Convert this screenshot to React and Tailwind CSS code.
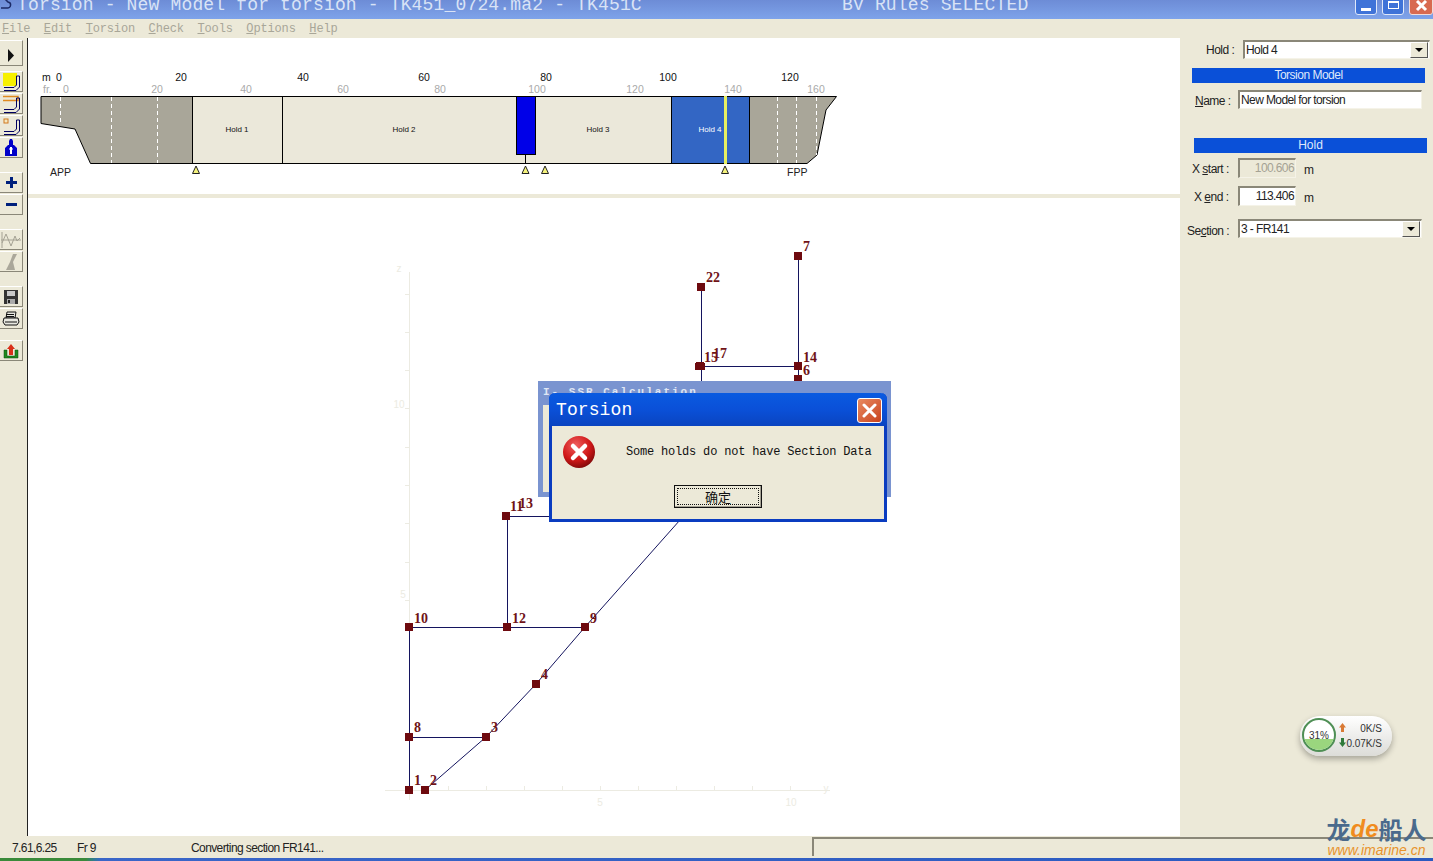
import React from 'react';

const SANS = "font-['Liberation_Sans',Arial,sans-serif]";

const menuItems = [
  ['F', 'ile'],
  ['E', 'dit'],
  ['T', 'orsion'],
  ['C', 'heck'],
  ['T', 'ools'],
  ['O', 'ptions'],
  ['H', 'elp'],
];

const CornerShape = ({ children }) => (
  <svg width="19" height="18" viewBox="0 0 19 18">
    {children}
    <path d="M2 14.5h10l2.5-2.5V3" fill="none" stroke="#000060" />
    <path d="M2 17.5h12l3.5-3.5V3" fill="none" stroke="#000060" />
    <path d="M14.5 3h3" stroke="#000060" />
  </svg>
);

const toolGroups = [
  {
    mt: 'mt-[2px]',
    btn: 'h-[26px] pt-[4px]',
    items: [
      <svg key="play" width="8" height="13" viewBox="0 0 8 13"><path d="M1 0l6 6.5-6 6.5z" fill="#111" /></svg>,
    ],
  },
  {
    mt: 'mt-[5px]',
    btn: 'h-[21px]',
    items: [
      <CornerShape key="a"><rect x="1" y="0" width="14" height="13" fill="#f7f000" /></CornerShape>,
      <CornerShape key="b"><path d="M1 1.5h15v4H1" fill="none" stroke="#e08a20" strokeWidth="1.4" /></CornerShape>,
      <CornerShape key="c"><rect x="2" y="2" width="4" height="4" fill="#f5e8c0" stroke="#d07a20" /></CornerShape>,
      <svg key="d" width="14" height="19" viewBox="0 0 14 19">
        <path d="M1 18V10L4 7h1V3l1-2h2l1 2v4h1l3 3v8z" fill="#0000c8" />
        <path d="M6 9h2v7H6zM5 10.5h4v1H5z" fill="#fff" />
      </svg>,
    ],
  },
  {
    mt: 'mt-[14px]',
    btn: 'h-[21px]',
    items: [
      <svg key="plus" width="13" height="13" viewBox="0 0 13 13"><path d="M5 1h3v4h4v3H8v4H5V8H1V5h4z" fill="#00207c" /></svg>,
      <svg key="minus" width="13" height="13" viewBox="0 0 13 13"><rect x="1" y="5" width="11" height="3" fill="#00207c" /></svg>,
    ],
  },
  {
    mt: 'mt-[14px]',
    btn: 'h-[21px]',
    items: [
      <svg key="wave" width="20" height="18" viewBox="0 0 20 18" fill="none" stroke="#a5a294">
        <path d="M1 1v16M0 9h20" />
        <path d="M1 12l4-9 5 12 4-10 2 5 3-3" />
      </svg>,
      <svg key="tie" width="16" height="18" viewBox="0 0 16 18">
        <path d="M10 1h4L10 9l2 8H3l4-8z" fill="#aaa79a" />
      </svg>,
    ],
  },
  {
    mt: 'mt-[14px]',
    btn: 'h-[21px]',
    items: [
      <svg key="save" width="16" height="16" viewBox="0 0 16 16">
        <path d="M1 1h14v14H1z" fill="#333" />
        <rect x="4" y="2" width="8" height="5" fill="#c8c8c8" />
        <rect x="4" y="10" width="8" height="5" fill="#aaa" />
        <rect x="5" y="11" width="2" height="3" fill="#222" />
      </svg>,
      <svg key="print" width="18" height="16" viewBox="0 0 18 16" fill="#e8e8e0" stroke="#111">
        <path d="M5 1h9l-1 6H4z" />
        <path d="M2 7h14l1 4-2 3H3l-2-3z" />
        <path d="M3 11h12M4 3.5h8M4 5.5h8" />
      </svg>,
    ],
  },
  {
    mt: 'mt-[11px]',
    btn: 'h-[21px]',
    items: [
      <svg key="export" width="16" height="16" viewBox="0 0 16 16">
        <path d="M1 7h3v6h8V7h3v8H1z" fill="#1f8a1f" stroke="#0c4a0c" strokeWidth=".5" />
        <path d="M8 1l4 5H10v6H6V6H4z" fill="#d9301a" />
      </svg>,
    ],
  },
];

const ToolButton = ({ className, children }) => (
  <div className={`w-[23px] flex items-center justify-center bg-[#ece9d8] border-r border-b border-[#8a8778] border-t border-t-white shrink-0 ${className}`}>
    {children}
  </div>
);

const Toolbar = () => (
  <div className="w-[28px] shrink-0 bg-[#ece9d8] border-r border-[#222] flex flex-col">
    {toolGroups.map((group, i) => (
      <div key={i} className={`flex flex-col gap-[1px] ${group.mt}`}>
        {group.items.map((item, j) => (
          <ToolButton key={j} className={group.btn}>{item}</ToolButton>
        ))}
      </div>
    ))}
  </div>
);

const ShipProfile = () => {
  const mScale = [[0, 59], [20, 181], [40, 303], [60, 424], [80, 546], [100, 668], [120, 790]];
  const frScale = [[0, 66], [20, 157], [40, 246], [60, 343], [80, 440], [100, 537], [120, 635], [140, 733], [160, 816]];
  return (
    <svg className="block" width="1152" height="156" viewBox="28 38 1152 156" fontFamily="Liberation Sans, Arial, sans-serif">
      <text x="42" y="81" fontSize="10.5" fill="#111">m</text>
      {mScale.map(([v, x]) => (
        <text key={v} x={x} y="81" fontSize="10.5" textAnchor="middle" fill="#111">{v}</text>
      ))}
      <text x="43" y="93" fontSize="10.5" fill="#aaa">fr.</text>
      {frScale.map(([v, x]) => (
        <text key={v} x={x} y="93" fontSize="10.5" textAnchor="middle" fill="#aaa">{v}</text>
      ))}

      <path d="M41 96.5H192.5V163.5H90.5L75 129L41 123.5Z" fill="#a9a699" stroke="#000" />
      <rect x="192.5" y="96.5" width="90" height="67" fill="#ebe8da" stroke="#000" />
      <rect x="282.5" y="96.5" width="389" height="67" fill="#ebe8da" stroke="#000" />
      <rect x="671.5" y="96.5" width="78" height="67" fill="#3366c4" stroke="#000" />
      <path d="M749.5 96.5H836.5L826 110L817 155L807 163.5H749.5Z" fill="#a9a699" stroke="#000" />

      {[[60.5, 97, 123], [111.5, 97, 163], [157.5, 97, 163], [777.5, 97, 163], [796.5, 97, 163], [816.5, 97, 155]].map(([x, y1, y2]) => (
        <line key={x} x1={x} x2={x} y1={y1} y2={y2} stroke="#fff" strokeDasharray="4 3" />
      ))}

      <rect x="516.5" y="96.5" width="19" height="58" fill="#0000e8" stroke="#000" />
      <line x1="525.5" x2="525.5" y1="155" y2="164" stroke="#000" />
      <rect x="724" y="96" width="3" height="68" fill="#e8f060" />

      <text x="237" y="132" fontSize="8" textAnchor="middle" fill="#111">Hold 1</text>
      <text x="404" y="132" fontSize="8" textAnchor="middle" fill="#111">Hold 2</text>
      <text x="598" y="132" fontSize="8" textAnchor="middle" fill="#111">Hold 3</text>
      <text x="710" y="132" fontSize="8" textAnchor="middle" fill="#fff">Hold 4</text>

      {[196, 525.5, 545, 725].map((x) => (
        <path key={x} d={`M${x} 166L${x + 3.5} 173.5H${x - 3.5}Z`} fill="#f4f27c" stroke="#222" />
      ))}

      <text x="50" y="176" fontSize="10.5" fill="#222">APP</text>
      <text x="787" y="176" fontSize="10.5" fill="#222">FPP</text>
    </svg>
  );
};

const nodes = [
  [409, 790, '1', 414, 785],
  [425, 790, '2', 430, 785],
  [486, 737, '3', 491, 732],
  [536, 684, '4', 541, 679],
  [585, 627, '9', 590, 623],
  [409, 737, '8', 414, 732],
  [409, 627, '10', 414, 623],
  [507, 627, '12', 512, 623],
  [506, 516, '11', 510, 511],
  [700, 366, '15', 704, 362],
  [798, 366, '14', 803, 362],
  [798, 379, '6', 803, 375],
  [701, 287, '22', 706, 282],
  [798, 256, '7', 803, 251],
];

const SectionChart = () => (
  <svg className="block" width="1152" height="638" viewBox="28 198 1152 638">
    <g stroke="#ecebe2" fill="none">
      <path d="M409.5 272V800" />
      <path d="M385 790.5H830" />
      {[294, 332, 370, 408, 447, 485, 523, 562, 600].map((y) => (
        <path key={y} d={`M405 ${y}.5H409`} />
      ))}
      {[448, 486, 524, 562, 600, 638, 676, 714, 752, 790].map((x) => (
        <path key={x} d={`M${x}.5 786V790`} />
      ))}
    </g>
    <g fontFamily="Liberation Sans, Arial, sans-serif" fontSize="10" fill="#ecebe2">
      <text x="399" y="408" textAnchor="middle">10</text>
      <text x="403" y="598" textAnchor="middle">5</text>
      <text x="399" y="272" textAnchor="middle">z</text>
      <text x="600" y="806" textAnchor="middle">5</text>
      <text x="791" y="806" textAnchor="middle">10</text>
      <text x="826" y="792" textAnchor="middle">y</text>
    </g>

    <g stroke="#14145e" fill="none">
      <path d="M409.5 790V627.5H585" />
      <path d="M409 737.5H486" />
      <path d="M507.5 627V516.5H560" />
      <path d="M701.5 287V385" />
      <path d="M798.5 256V385" />
      <path d="M700 366.5H798" />
      <path d="M425 790L486 737L536 684L585 627L680 520" />
    </g>

    {nodes.map(([x, y, label]) => (
      <rect key={label} x={x - 4} y={y - 4} width="8" height="8" fill="#6e0a0f" />
    ))}
    <rect x="695" y="363" width="10" height="7" fill="#6e0a0f" />
    <g fontFamily="Liberation Serif, Times New Roman, serif" fontSize="14" fontWeight="bold" fill="#701317">
      {nodes.map(([, , label, tx, ty]) => (
        <text key={label} x={tx} y={ty}>{label}</text>
      ))}
      <text x="519" y="508">13</text>
      <text x="713" y="358">17</text>
    </g>
  </svg>
);

const Label = ({ pre, mark, post, className }) => (
  <span className={`absolute text-[12px] tracking-[-0.5px] text-[#222] ${className}`}>
    {pre}
    {mark && <span className="underline">{mark}</span>}
    {post}
  </span>
);

const Arrow = () => (
  <div className="w-[18px] h-[16px] mr-[1px] shrink-0 bg-[#ece9d8] border border-t-white border-l-white border-r-[#555] border-b-[#555] flex items-center justify-center">
    <div className="w-0 h-0 border-x-[4px] border-x-transparent border-t-[4px] border-t-black" />
  </div>
);

const Field = ({ className, children, disabled, arrow, align }) => (
  <div
    className={`flex items-center text-[12px] tracking-[-0.6px] border-t-2 border-l-2 border-t-[#8a8778] border-l-[#8a8778] border-b border-r border-b-[#f5f3e8] border-r-[#f5f3e8] ${
      disabled ? 'bg-[#ece9d8] text-[#a5a294]' : 'bg-white text-[#222]'
    } ${align === 'right' ? 'justify-end pr-[1px] pb-[1px]' : 'pl-[1px]'} ${className}`}
  >
    <span className={arrow ? 'flex-1 whitespace-nowrap' : 'whitespace-nowrap'}>{children}</span>
    {arrow && <Arrow />}
  </div>
);

const RightPanel = () => (
  <div className={`relative w-[253px] shrink-0 bg-[#ece9d8] ${SANS}`}>
    <Label className="left-[26px] top-[3px]" pre="Hold :" />
    <Field arrow className="absolute left-[63px] top-[2px] w-[187px] h-[19px]">Hold 4</Field>
    <div className="absolute left-[12px] top-[30px] w-[233px] h-[15px] bg-[#0a50d8] text-[#dfe8fa] text-[12px] tracking-[-0.5px] leading-[15px] text-center">Torsion Model</div>
    <Label className="left-[15px] top-[54px]" mark="N" post="ame :" />
    <Field className="absolute left-[58px] top-[52px] w-[184px] h-[19px]">New Model for torsion</Field>
    <div className="absolute left-[14px] top-[100px] w-[233px] h-[15px] bg-[#0a50d8] text-[#dfe8fa] text-[12px] leading-[15px] text-center">Hold</div>
    <Label className="left-[12px] top-[122px]" pre="X " mark="s" post="tart :" />
    <Field disabled align="right" className="absolute left-[58px] top-[120px] w-[58px] h-[20px]">100.606</Field>
    <Label className="left-[124px] top-[123px]" pre="m" />
    <Label className="left-[14px] top-[150px]" pre="X " mark="e" post="nd :" />
    <Field align="right" className="absolute left-[58px] top-[148px] w-[58px] h-[20px]">113.406</Field>
    <Label className="left-[124px] top-[151px]" pre="m" />
    <Label className="left-[7px] top-[184px]" pre="Se" mark="c" post="tion :" />
    <Field arrow className="absolute left-[58px] top-[181px] w-[184px] h-[19px]">3 - FR141</Field>

    {/* network meter */}
    <div className="absolute left-[120px] top-[678px] w-[92px] h-[40px] rounded-full bg-gradient-to-b from-white to-[#dcdcd8] shadow-[0_3px_6px_rgba(0,0,0,0.3)]">
      <div className="absolute left-[2px] top-[2px] w-[34px] h-[34px] rounded-full border-2 border-[#4f8f55] overflow-hidden bg-white">
        <div className="absolute left-0 right-0 bottom-0 h-[11px] bg-[#9ad67e]" />
        <span className="absolute inset-0 flex items-center justify-center text-[10px] text-[#333]">31%</span>
      </div>
      <svg className="absolute left-[38px] top-[6px]" width="9" height="11" viewBox="0 0 9 11"><path d="M4.5 1L8 5.5H6V10H3V5.5H1z" fill="#d97a35" /></svg>
      <svg className="absolute left-[38px] top-[21px]" width="9" height="11" viewBox="0 0 9 11"><path d="M4.5 10L1 5.5h2V1h3v4.5h2z" fill="#2f7a3a" /></svg>
      <span className="absolute right-[10px] top-[5px] text-[10px] text-[#333]">0K/S</span>
      <span className="absolute right-[10px] top-[20px] text-[10px] text-[#333]">0.07K/S</span>
    </div>
  </div>
);

const ErrorDialog = () => (
  <>
    {/* window behind the message box */}
    <div className="absolute left-[538px] top-[381px] w-[353px] h-[116px] bg-[#7a94d0] pl-[5px] pr-[5px] pb-[5px] flex flex-col">
      <div className="h-[24px] text-[11px] leading-[22px] font-bold text-[#dfe6f5] font-['Liberation_Mono',monospace] tracking-[2px]">I- SSR Calculation</div>
      <div className="flex-1 bg-[#ece9d8]" />
    </div>
    <div className="absolute left-[549px] top-[393px] w-[338px] h-[129px] bg-[#ece9d8] border-[3px] border-t-0 border-[#0a3cc0] rounded-t-[6px] flex flex-col">
      <div className="relative -mx-[3px] h-[33px] rounded-t-[6px] bg-gradient-to-b from-[#0a5ae0] via-[#0a50d8] to-[#0a44c0] shrink-0">
        <span className="absolute left-[7px] top-[5px] text-[18px] leading-[24px] tracking-[0.1px] text-white font-['Liberation_Mono',monospace]">Torsion</span>
        <div className="absolute right-[5px] top-[5px] w-[25px] h-[25px] rounded-[3px] border border-white bg-gradient-to-br from-[#e88a60] to-[#c8401a] flex items-center justify-center">
          <svg width="15" height="15" viewBox="0 0 15 15"><path d="M2 2l11 11M13 2L2 13" stroke="#fff" strokeWidth="3" strokeLinecap="round" /></svg>
        </div>
      </div>
      <div className="relative flex-1">
        <svg className="absolute left-[10px] top-[9px]" width="34" height="34" viewBox="0 0 34 34">
          <defs>
            <radialGradient id="errorFill" cx="40%" cy="30%" r="75%">
              <stop offset="0" stopColor="#f06060" />
              <stop offset="0.6" stopColor="#d01818" />
              <stop offset="1" stopColor="#7a0808" />
            </radialGradient>
          </defs>
          <circle cx="17" cy="17" r="16" fill="url(#errorFill)" />
          <path d="M11 11l12 12M23 11L11 23" stroke="#fff" strokeWidth="4.5" strokeLinecap="round" />
        </svg>
        <span className="absolute left-[74px] top-[18px] text-[12px] leading-[16px] text-[#111] whitespace-nowrap font-['Liberation_Mono',monospace] tracking-[-0.19px]">Some holds do not have Section Data</span>
        <button className="absolute left-[122px] top-[59px] w-[88px] h-[23px] p-[2px] bg-[#ece9d8] border border-[#111] shadow-[inset_-1px_-1px_0_#a5a294]">
          <div className="w-full h-full flex items-center justify-center border border-dotted border-[#111] text-[13px] text-[#111] font-['Noto_Sans_CJK_SC',sans-serif]">确定</div>
        </button>
      </div>
    </div>
  </>
);

const App = () => (
  <div className={`relative w-[1433px] h-[861px] overflow-hidden flex flex-col bg-[#ece9d8] ${SANS}`}>
    {/* title bar, scrolled partly off the top */}
    <div className="relative h-[19px] shrink-0 overflow-hidden bg-gradient-to-b from-[#6d8cd6] to-[#7ea3ea] text-[#d9e3f6] font-['Liberation_Mono',monospace] text-[18px] leading-[14px] whitespace-nowrap">
      <svg className="absolute left-0 -top-[2px]" width="12" height="12" viewBox="0 0 12 12"><path d="M1 10h6a3 3 0 0 0 1-6L5 1" fill="none" stroke="#1c2a66" strokeWidth="1.5" /></svg>
      <span className="absolute left-[17px] -top-[2px] tracking-[0.16px]">Torsion - New Model for torsion - TK451_0724.ma2 - TK451C</span>
      <span className="absolute left-[842px] -top-[2px] tracking-[0.16px]">BV Rules SELECTED</span>
      <div className="absolute left-[1355px] -top-[5px] flex gap-[5px]">
        <div className="w-[22px] h-[20px] rounded-[3px] border border-[#dfe8fa] bg-[#3f73d8] flex items-end justify-center pb-[3px]"><div className="w-[10px] h-[3px] bg-white" /></div>
        <div className="w-[22px] h-[20px] rounded-[3px] border border-[#dfe8fa] bg-[#3f73d8] flex items-center justify-center"><div className="w-[11px] h-[8px] border border-t-2 border-white" /></div>
        <div className="w-[24px] h-[20px] rounded-[3px] border border-[#f0dcd8] bg-[#d86a50] flex items-center justify-center">
          <svg width="13" height="13" viewBox="0 0 13 13"><path d="M2 2l9 9M11 2l-9 9" stroke="#fff" strokeWidth="3" /></svg>
        </div>
      </div>
    </div>

    {/* menu */}
    <div className="h-[19px] shrink-0 flex items-center gap-[13.6px] pl-[2px] text-[#a8a698] font-['Liberation_Mono',monospace] text-[12px] tracking-[-0.15px]">
      {menuItems.map(([mark, rest], i) => (
        <span key={i}>
          <span className="underline">{mark}</span>
          {rest}
        </span>
      ))}
    </div>

    <div className="flex h-[798px] shrink-0">
      <Toolbar />
      <div className="flex flex-col flex-1 min-w-0 bg-white">
        <ShipProfile />
        <div className="h-[4px] shrink-0 bg-[#ece9d8]" />
        <SectionChart />
      </div>
      <RightPanel />
    </div>

    {/* status bar */}
    <div className="relative h-[22px] shrink-0 flex items-center text-[12px] tracking-[-0.6px] text-[#222]">
      <span className="ml-[12px] w-[65px] mt-[1px]">7.61,6.25</span>
      <span className="w-[114px] mt-[1px]">Fr 9</span>
      <span className="w-[621px] mt-[1px]">Converting section FR141...</span>
      <div className="self-stretch flex-1 mt-[1px] mb-[2px] border-t-2 border-l-2 border-t-[#8a8778] border-l-[#8a8778]" />
    </div>
    <div className="h-[3px] shrink-0 bg-gradient-to-r from-[#3a8a3a] from-[6%] via-[#3a66c8] via-[7%] to-[#2a5ac0]" />

    <ErrorDialog />

    {/* watermark */}
    <div className="absolute left-[1323px] top-[815px] w-[107px] flex flex-col items-center">
      <div className="flex items-center text-[24px] leading-[28px] font-bold text-[#4a6a8c] font-['Noto_Sans_CJK_SC',sans-serif] whitespace-nowrap">
        龙<span className={`${SANS} italic text-[#f08c1e] text-[24px]`}>de</span>船人
      </div>
      <div className={`${SANS} italic text-[14px] leading-[14px] text-[#e8932c] whitespace-nowrap`}>www.imarine.cn</div>
    </div>
  </div>
);

export default App;
